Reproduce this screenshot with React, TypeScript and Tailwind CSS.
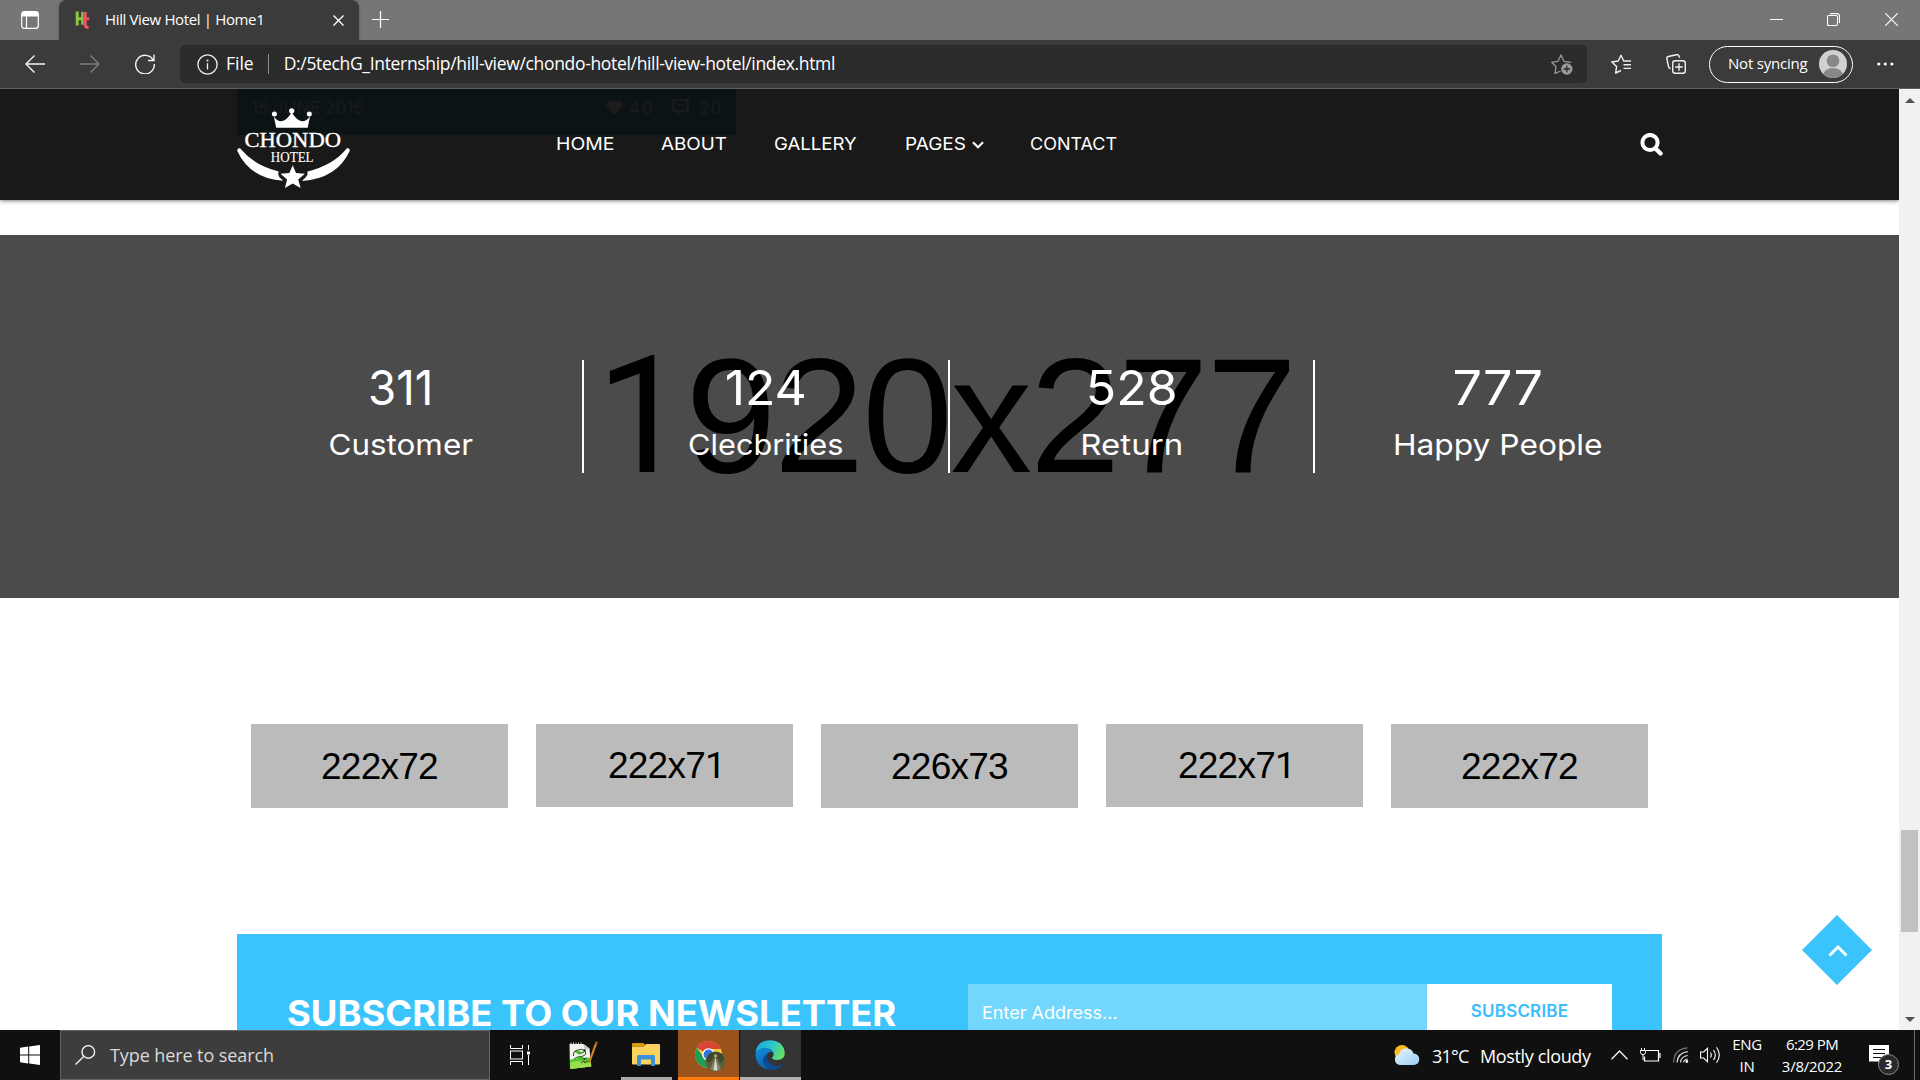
import React from "react";

const navItems = [
  { label: "HOME", cls: "w-[105px]", text: "scale-x-[1.115]" },
  { label: "ABOUT", cls: "w-[113px]", text: "scale-x-[1.085]" },
  { label: "GALLERY", cls: "w-[131px]", text: "scale-x-[1.07]" },
  { label: "PAGES", cls: "w-[125px]", text: "scale-x-[1.09]", menu: true },
  { label: "CONTACT", cls: "w-[100px]", text: "scale-x-[1.035]" },
];

const stats = [
  { value: "311", label: "Customer", v: "scale-x-[0.95]", l: "scale-x-[1.083]" },
  { value: "124", label: "Clecbrities", v: "scale-x-[1.04]", l: "scale-x-[1.06]" },
  { value: "528", label: "Return", v: "scale-x-[1.042]", l: "scale-x-[1.14]" },
  { value: "777", label: "Happy People", v: "scale-x-[1.086]", l: "scale-x-[1.094]" },
];

const partners = [
  { size: "222x72", cls: "h-[84px]" },
  { size: "222x71", cls: "h-[83px] pl-1" },
  { size: "226x73", cls: "h-[84px]" },
  { size: "222x71", cls: "h-[83px] pl-1" },
  { size: "222x72", cls: "h-[84px]" },
];

/* Dimension label whose "1" is drawn without a foot. */
function SizeLabel({ text }: { text: string }) {
  return (
    <span className="whitespace-nowrap">
      {text.split(/(1)/).map((part, i) =>
        part === "1" ? (
          <span key={i} className="font-['Roboto']">
            1
          </span>
        ) : (
          part
        ),
      )}
    </span>
  );
}

function TabStrip() {
  return (
    <div className="flex h-10 shrink-0 items-stretch bg-[#767676]">
      <div className="flex w-[59px] items-center pl-[21px]">
        <svg width="18" height="18" viewBox="0 0 18 18" fill="none" stroke="#fff" strokeWidth="1.2">
          <rect x="0.7" y="0.7" width="16.6" height="16.6" rx="2.6" />
          <path d="M1 3.5a2.5 2.5 0 0 1 2.5-2.5h11a2.5 2.5 0 0 1 2.5 2.5V5H1z" fill="#fff" />
          <path d="M5.5 5v12.5" />
        </svg>
      </div>
      <div className="flex w-[300px] items-center rounded-t-lg bg-[#3b3b3b] pl-4 shadow-[0_0_3px_rgba(0,0,0,0.35)]">
        <svg width="15" height="18" viewBox="0 0 15 18" fill="none">
          <path d="M2.200 0.500v14M2.200 7.800h5" stroke="#8cc540" strokeWidth="3" />
          <path d="M7.400 0.800v13" stroke="#8cc540" strokeWidth="2.400" />
          <path d="M10.200 1v12.500q0 3 3.400 3" stroke="#ec5564" strokeWidth="3" />
          <path d="M10.500 7.800h3.800" stroke="#ec5564" strokeWidth="2.800" />
        </svg>
        <span className="ml-[15px] w-[228px] whitespace-nowrap pb-0.5 font-['Open_Sans'] text-[15px] leading-5 tracking-[-0.36px] text-white">
          Hill View Hotel | Home1
        </span>
        <svg width="11" height="11" viewBox="0 0 11 11" stroke="#fff" strokeWidth="1.4" className="shrink-0">
          <path d="M0.5 0.5l10 10M10.5 0.5l-10 10" />
        </svg>
      </div>
      <div className="flex flex-1 items-center pl-[13px]">
        <svg width="17" height="17" viewBox="0 0 17 17" stroke="#fff" strokeWidth="1.2" className="mb-px">
          <path d="M8.5 0v17M0 8.5h17" />
        </svg>
      </div>
      <div className="flex w-[150px] items-center pb-px">
        <svg width="13" height="13" viewBox="0 0 13 13" stroke="#fff">
          <path d="M0 6.5h13" />
        </svg>
        <svg className="ml-11" width="13" height="13" viewBox="0 0 13 13" fill="none" stroke="#fff" strokeWidth="1.1">
          <rect x="0.5" y="2.5" width="10" height="10" rx="1.4" />
          <path d="M3 0.6h7.2a2.3 2.3 0 0 1 2.3 2.3V10" />
        </svg>
        <svg className="ml-[45px]" width="13" height="13" viewBox="0 0 13 13" stroke="#fff" strokeWidth="1.2">
          <path d="M0.3 0.3l12.4 12.4M12.7 0.3L0.3 12.7" />
        </svg>
      </div>
    </div>
  );
}

function Toolbar() {
  return (
    <div className="flex h-[49px] shrink-0 items-start border-b border-[#606060] bg-[#3b3b3b] pt-[5px] font-['Open_Sans'] text-white">
      <div className="flex h-[38px] w-[180px] items-center pb-px pl-[25px]">
        <svg width="20" height="18" viewBox="0 0 20 18" fill="none" stroke="#f5f5f5" strokeWidth="1.4">
          <path d="M20 9H1M9.5 0.5L1 9l8.500 8.500" />
        </svg>
        <svg className="ml-[35px]" width="20" height="18" viewBox="0 0 20 18" fill="none" stroke="#7c7c7c" strokeWidth="1.4">
          <path d="M0 9h19M10.500 0.500L19 9l-8.500 8.500" />
        </svg>
        <svg className="ml-[35px]" width="20" height="20" viewBox="0 0 20 20" fill="none" stroke="#f5f5f5" strokeWidth="1.400">
          <path d="M18.200 6.200A9.300 9.300 0 1 0 19.300 10" />
          <path d="M19 0.500v6h-6" />
        </svg>
      </div>
      <div className="flex h-[38px] w-[1407px] items-center rounded-[5px] bg-[#2b2b2b] pl-[17px]">
        <svg width="21" height="21" viewBox="0 0 21 21" fill="none" stroke="#f0f0f0" strokeWidth="1.300">
          <circle cx="10.500" cy="10.500" r="9.600" />
          <path d="M10.500 9.200v6.300" />
          <path d="M10.500 5.600v1.800" strokeWidth="1.700" />
        </svg>
        <span className="ml-2 pb-0.5 text-[17.5px] leading-6">File</span>
        <span className="ml-[14px] h-5 w-px bg-[#8b8b8b]" />
        <span className="ml-[15px] flex-1 whitespace-nowrap pb-0.5 text-[17.5px] leading-6 tracking-[-0.33px]">
          D:/5techG_Internship/hill-view/chondo-hotel/hill-view-hotel/index.html
        </span>
        <svg className="mr-[14px]" width="22" height="21" viewBox="0 0 22 21" fill="none" stroke="#9a9a9a" strokeWidth="1.300">
          <path d="M9.500 17l-5.500 2.500 1-6.700L0.800 8.300 7 7.300 10 1l3 6.300 7.200 1" strokeLinejoin="round" />
          <circle cx="15.800" cy="15" r="5.700" fill="#9a9a9a" stroke="none" />
          <path d="M15.800 11.800v6.400M12.600 15h6.400" stroke="#2b2b2b" />
        </svg>
      </div>
      <div className="flex h-[38px] items-center pl-6">
        <svg width="20" height="20" viewBox="0 0 20 20" fill="none" stroke="#f0f0f0" strokeWidth="1.400" strokeLinejoin="round">
          <path d="M10 16.500L4.600 19l1-6.400L0.800 8l6.400-1L10 1.200 12.700 7H20M12.500 10.700H20M12.500 14.400H20" />
        </svg>
        <svg className="ml-[35px]" width="20" height="20" viewBox="0 0 20 20" fill="none" stroke="#f0f0f0" strokeWidth="1.400">
          <rect x="6.700" y="6.700" width="12.600" height="12.600" rx="2.500" />
          <path d="M13 9.200v7.600M9.200 13h7.600" />
          <path d="M4.500 14.500q-1.600-.4-2-2L0.900 5Q0.400 3 2.400 2.500L10.500 0.700q2-.4 2.600 1.500l.5 1.600" />
        </svg>
        <div className="ml-[23px] flex h-[37px] w-[144px] items-center rounded-full border-[1.5px] border-white pl-[18px]">
          <span className="w-[91px] whitespace-nowrap pb-0.5 text-[15px] leading-5 tracking-[-0.2px]">Not syncing</span>
          <svg width="28" height="28" viewBox="0 0 28 28" className="shrink-0">
            <defs>
              <clipPath id="avatarClip">
                <circle cx="14" cy="14" r="14" />
              </clipPath>
            </defs>
            <g clipPath="url(#avatarClip)">
              <rect width="28" height="28" fill="#d2d0ce" />
              <circle cx="14" cy="10.700" r="6.300" fill="#8a8886" />
              <ellipse cx="14" cy="25.500" rx="10" ry="7.500" fill="#8a8886" />
            </g>
          </svg>
        </div>
        <svg className="ml-6" width="17" height="4" viewBox="0 0 17 4" fill="#fff">
          <circle cx="1.800" cy="2" r="1.600" />
          <circle cx="8.300" cy="2" r="1.600" />
          <circle cx="14.900" cy="2" r="1.600" />
        </svg>
      </div>
    </div>
  );
}

function Logo() {
  return (
    <svg className="relative" width="113" height="81" viewBox="0 0 113 81" fill="#fff">
      <path d="M39.200 19.700L36.800 8.500q4 5.600 8.700 4.600 5-1.200 9.200-9 4.200 7.800 9.300 9 4.700 1 9-4.600l-2.300 11.200z" />
      <circle cx="37.400" cy="6" r="2.500" />
      <circle cx="54.700" cy="2.800" r="2.600" />
      <circle cx="72.300" cy="6" r="2.500" />
      <text x="7.500" y="38.700" textLength="96.500" lengthAdjust="spacingAndGlyphs" fontFamily="Liberation Serif" fontSize="21.500" stroke="#fff" strokeWidth="0.350">
        CHONDO
      </text>
      <text x="33.800" y="54" textLength="42.800" lengthAdjust="spacingAndGlyphs" fontFamily="Liberation Serif" fontSize="14" stroke="#fff" strokeWidth="0.100">
        HOTEL
      </text>
      <path d="M0.300 43Q0 40.300 2.200 40.300q1.300 0 2.200 1.400Q17 57 41.700 63.500q-1.200 3.400 1 6l3.500 3.200Q13 70.500 0.300 43z" />
      <path d="M112.700 43q.3-2.700-1.900-2.700-1.300 0-2.200 1.400Q96 57 70.500 63.500q.5 3.400-1.500 5.500L65 73Q100 70.500 112.700 43z" />
      <path d="M55.700 57.300l3.300 7.800 8.900.7-6.700 5.800 2.400 8.400-7.900-4.500-7.800 4.500 2.200-8.400-6.600-5.800 8.900-.7z" />
    </svg>
  );
}

function SiteHeader() {
  return (
    <header className="relative z-10 flex h-[111px] shrink-0 items-center bg-[#191919] pl-[237px] shadow-[0_1px_4px_rgba(0,0,0,0.5)]">
      <div className="absolute left-[237px] top-0 flex h-[46px] w-[499px] bg-[#0b1314] pl-[14px] pt-[7px] text-[17.4px] leading-6 text-[#1a1b1b]">
        <span className="w-[355px]">15 JUNE 2015</span>
        <svg className="mt-1" width="17" height="15" viewBox="0 0 17 15" fill="#1c1c1c">
          <path d="M8.500 15L1.500 7.500Q-.5 4.800 1.300 2 3-.2 5.500.2 7.600.6 8.500 2.500 9.400.6 11.500.2q2.500-.4 4.200 1.800 1.800 2.800-.2 5.500z" />
        </svg>
        <span className="ml-[6px] w-[43px] tracking-[1.500px]">40</span>
        <svg className="mt-[3px]" width="17" height="17" viewBox="0 0 17 17" fill="none" stroke="#1c1c1c" strokeWidth="2">
          <path d="M1.200 1.200h14.600v10.600H9L6 15v-3.200H1.200z" />
          <path d="M4.500 6.500h8" strokeDasharray="2 1" />
        </svg>
        <span className="ml-2.5 tracking-[1px]">20</span>
      </div>
      <div className="w-[319px] pt-[7px]">
        <Logo />
      </div>
      <nav className="flex pb-[1px] text-[17.4px] leading-6 text-white">
        {navItems.map((n) => (
          <a key={n.label} className={"flex items-center " + n.cls}>
            <span className={"origin-left " + n.text}>{n.label}</span>
            {n.menu && (
              <svg className="ml-[11px] mt-[1px]" width="12" height="8" viewBox="0 0 12 8" fill="none" stroke="#fff" strokeWidth="2.200">
                <path d="M1 1.200l5 5 5-5" />
              </svg>
            )}
          </a>
        ))}
      </nav>
      <svg className="mb-px ml-[510px]" width="23" height="23" viewBox="0 0 23 23" fill="none" stroke="#fff">
        <circle cx="10" cy="9.500" r="7.600" strokeWidth="4" />
        <path d="M15.500 15.500l5 5" strokeWidth="4.400" strokeLinecap="round" />
      </svg>
    </header>
  );
}

function Stats() {
  return (
    <section className="relative mt-[35px] flex h-[363px] shrink-0 justify-center bg-[#4b4b4b] pt-[125px]">
      <div className="absolute inset-0 right-[8px] flex items-center justify-center font-['Liberation_Sans'] text-[163px] tracking-[-2.3px] text-black">
        <SizeLabel text="1920x277" />
      </div>
      <div className="relative flex h-[113px] w-[1462px] text-center text-white">
        {stats.map((s, i) => (
          <div key={s.value} className={"w-1/4 " + (i < 3 ? "border-r-2 border-white" : "")}>
            <div className={"text-[48px] leading-[56px] " + s.v}>{s.value}</div>
            <div className={"text-[29px] leading-[57px] " + s.l}>{s.label}</div>
          </div>
        ))}
      </div>
    </section>
  );
}

function Newsletter() {
  return (
    <section className="mx-auto mt-[126px] flex h-[146px] w-[1425px] shrink-0 items-start bg-[#3bc3fb] pl-[50px] pt-[50px]">
      <h2 className="w-[681px] whitespace-nowrap pt-[7px] text-[35px] font-bold leading-[44px] text-white">
        <span className="inline-block origin-left scale-x-[1.039]">SUBSCRIBE TO OUR NEWSLETTER</span>
      </h2>
      <div className="flex h-[60px] w-[459px] bg-[#73d6fd] pl-[14px] text-[17px] leading-[58px] text-white">
        <span className="origin-left scale-x-[1.06]">Enter Address...</span>
      </div>
      <button className="h-[60px] w-[185px] bg-white pb-[5px] text-[17px] font-semibold tracking-[0.200px] text-[#3bbcfb]">
        SUBSCRIBE
      </button>
    </section>
  );
}

function Scrollbar() {
  return (
    <div className="flex w-[21px] shrink-0 flex-col items-center bg-[#f1f1f1]">
      <svg className="mt-[9px]" width="10" height="5" viewBox="0 0 10 5" fill="#505050">
        <path d="M0 5L5 0l5 5z" />
      </svg>
      <div className="mt-[727px] h-[102px] w-[17px] bg-[#c1c1c1]" />
      <svg className="mt-[85px]" width="10" height="5" viewBox="0 0 10 5" fill="#505050">
        <path d="M0 0l5 5 5-5z" />
      </svg>
    </div>
  );
}

function Taskbar() {
  return (
    <div className="flex h-[50px] shrink-0 bg-[#101010] font-['Open_Sans'] text-white">
      <div className="flex w-[60px] items-center justify-center">
        <svg width="20" height="20" viewBox="0 0 20 20" fill="#fff">
          <path d="M0 2.700L8.200 1.600V9.500H0zM9.200 1.400L20 0v9.500H9.200zM0 10.500h8.200v8L0 17.300zM9.200 10.500H20V20L9.200 18.600z" />
        </svg>
      </div>
      <div className="flex w-[430px] items-center border border-[#646464] bg-[#3d3d3d] pl-[14px]">
        <svg width="21" height="20" viewBox="0 0 21 20" fill="none" stroke="#f0f0f0" strokeWidth="1.400">
          <circle cx="13.300" cy="6.900" r="6.300" />
          <path d="M8.700 11.400L0.500 19.500" />
        </svg>
        <span className="ml-[14px] text-[18px] leading-6 tracking-[-0.090px] text-[#dadada]">Type here to search</span>
      </div>
      <div className="flex w-[60px] items-center pl-5">
        <svg width="21" height="20" viewBox="0 0 21 20" fill="none" stroke="#fff">
          <path d="M0.500 0v3.500h12V0M0.500 20v-3.500h12V20M18.500 0v5M18.500 10v10" />
          <rect x="0.500" y="6" width="12" height="8" />
          <rect x="17" y="6.500" width="3" height="3" fill="#fff" stroke="none" />
        </svg>
      </div>
      <div className="flex w-[71px] items-center pl-[19px]">
        <svg width="29" height="29" viewBox="0 0 29 29">
          <path d="M0.500 3h14l6 4.500 1.500 18L1 28z" fill="#f2f4ee" />
          <path d="M14.500 3l1 5.500 5-1z" fill="#c3c8bd" />
          <path d="M1 18.500l20.500-2 .8 8.800L1.300 28z" fill="#56c832" />
          <path d="M1 22q8-4 21 0l.3 3.500L1.300 28z" fill="#9be04c" />
          <path d="M4.500 15q-1-5 4.500-6 4-2 7 1 2 4-2 5l-4 1q4 3 8 1M6 10l4 3 5-2M5 18q6-5 11 1M12 22l3-2 1 2 3-2" fill="none" stroke="#2b4522" strokeWidth="1" />
          <path d="M6 11q5-2.500 8 1-3 3-8-1zM7 17q4-3 8 0-4 3-8 0z" fill="#4fb82a" />
          <circle cx="15.500" cy="9.500" r="1.200" fill="#1b2b16" />
          <path d="M2 3v-1.500M4.500 3v-1.500M7 3v-1.500M9.500 3v-1.500M12 3v-1.500" stroke="#c8c8c8" />
          <path d="M27.500 1.200L20 22" stroke="#d6841d" strokeWidth="2.200" />
          <path d="M27.800 0.600l-.9 2.600" stroke="#9c4930" strokeWidth="2.400" />
        </svg>
      </div>
      <div className="flex w-[51px] flex-col items-center justify-between">
        <svg className="mr-px mt-[13px]" width="28" height="23" viewBox="0 0 28 23">
          <path d="M0 1q0-1 1-1h10q1 0 1.500 1l.8 2.500H0z" fill="#d99a0c" />
          <path d="M0 3.500h12l2-2.500H27q1 0 1 1v18.500q0 1-1 1H1q-1 0-1-1z" fill="#fbd25c" />
          <path d="M5 13.500q0-1.500 1.500-1.500h15q1.500 0 1.500 1.500V23h-4v-6.500H9V23H5z" fill="#3d8fd6" />
        </svg>
        <div className="h-[3px] w-full bg-[#aca8ac]" />
      </div>
      <div className="ml-[6px] flex w-[61px] flex-col items-center justify-between bg-[#9a541b]">
        <svg className="ml-0.5 mt-[10px]" width="32" height="32" viewBox="0 0 32 32">
          <circle cx="14.500" cy="14.500" r="13.500" fill="#f8c93c" />
          <path d="M14.500 14.500L2.800 7.750A13.500 13.500 0 0 1 26.800 9H14.500z" fill="#da4437" />
          <path d="M2.800 7.750A13.500 13.500 0 0 0 13.500 28l5.800-10.500-9.500 0z" fill="#1d9e57" />
          <circle cx="14.500" cy="14.500" r="6.300" fill="#fff" />
          <circle cx="14.500" cy="14.500" r="4.900" fill="#3277e8" />
          <circle cx="21.500" cy="21.500" r="10" fill="#5b5e3c" />
          <path d="M15 14q6-4 13 0l2 6-4 3-2-5h-5l-3 5-4-3z" fill="#3b4a2c" />
          <path d="M21.500 17l-5.500 12q5.500 3 11 0z" fill="#8a8163" />
          <path d="M21.500 17l-2 13.500h4z" fill="#cfdad0" />
          <circle cx="21.500" cy="16" r="1.700" fill="#c89a70" />
        </svg>
        <div className="h-[3px] w-full bg-[#ff7a06]" />
      </div>
      <div className="ml-px flex w-[61px] flex-col items-center justify-between bg-[#333333]">
        <svg className="mr-px mt-[10px]" width="30" height="30" viewBox="0 0 30 30">
          <defs>
            <linearGradient id="edgeTop" x1="0" y1="0.300" x2="1" y2="0.600">
              <stop offset="0" stopColor="#22a8e0" />
              <stop offset="0.550" stopColor="#2fc9c9" />
              <stop offset="1" stopColor="#6be155" />
            </linearGradient>
            <linearGradient id="edgeLow" x1="0" y1="0" x2="0.600" y2="1">
              <stop offset="0" stopColor="#1291dc" />
              <stop offset="1" stopColor="#0a56a8" />
            </linearGradient>
          </defs>
          <path d="M0.500 13Q2 .3 15 0.200 28.500.5 29.800 13q0 7-7.800 7-5.500-.2-4.800-2.500 2.300-2.300 1-5Q16 8.500 10.500 8.200 3.500 8.300.5 13z" fill="url(#edgeTop)" />
          <path d="M.3 14Q2 8 9.500 8q6 .2 8.500 4-3.500-1-5.500 1.500-3 4.500.8 9 4.200 5 11 3.200 2.300-.8 3.300-1.300Q23 30.500 14.500 29.800 1.500 28.500.3 14z" fill="url(#edgeLow)" />
          <path d="M12.500 13.500q-5 2.500-4.500 8 1.500 7.500 9 8.300 6.500-.8 11.300-6-7.500 4.700-13-.3-5-5-2.800-10z" fill="#0d4a92" />
        </svg>
        <div className="h-[3px] w-full bg-[#b4b0b4]" />
      </div>
      <div className="flex flex-1 items-center pl-[593px]">
        <svg width="26" height="20" viewBox="0 0 26 20">
          <defs>
            <linearGradient id="cloud" x1="0" y1="0" x2="1" y2="1">
              <stop offset="0" stopColor="#eaf6fe" />
              <stop offset="1" stopColor="#9bccf2" />
            </linearGradient>
          </defs>
          <circle cx="8" cy="7.500" r="7.500" fill="#fbb91f" />
          <path d="M6 20a5.500 5.500 0 0 1-1-10.800q1.500-5.700 7.500-5.900 5.500.2 7 5.300 5.500.4 5.800 5.700-.3 5.400-5.800 5.700z" fill="url(#cloud)" />
        </svg>
        <span className="ml-[12px] w-[48px] whitespace-nowrap pt-px text-[18px] leading-6 tracking-[-0.800px]">31°C</span>
        <span className="w-[131px] whitespace-nowrap pt-px text-[18px] leading-6 tracking-[-0.360px]">Mostly cloudy</span>
        <svg width="17" height="10" viewBox="0 0 17 10" fill="none" stroke="#f0f0f0" strokeWidth="1.400">
          <path d="M0.500 9.300L8.500 1l8 8.300" />
        </svg>
        <svg className="ml-[12px]" width="21" height="14" viewBox="0 0 21 14" fill="none" stroke="#fff">
          <path d="M6 2.500h12.500v10.500H4.500V8.500M20 5v5" strokeWidth="1.200" />
          <path d="M1.500 0v2.500M4.500 0v2.500M0.500 2.500h5v2.200q-.3 1.800-2.500 1.900-2.200-.1-2.500-1.900zM3 6.500V12" />
        </svg>
        <svg className="ml-[12px]" width="16" height="16" viewBox="0 0 16 16" fill="none" strokeWidth="1.200">
          <path d="M0.600 15.500Q1 2 14.500 0.800" stroke="#777" />
          <path d="M4 15.500Q4.500 6 14.800 4.700M7.500 15.500Q8 9.500 14.800 8.500M10.500 15.500q.5-3 4.300-3.500" stroke="#d8d8d8" />
          <circle cx="13.800" cy="14.500" r="1.400" fill="#fff" />
        </svg>
        <svg className="ml-[11px]" width="21" height="18" viewBox="0 0 21 18" fill="none" stroke="#fff" strokeWidth="1.100">
          <path d="M0.600 6h3L7.500 2.300v13.400L3.600 12h-3z" />
          <path d="M10.500 6.500q1.600 2.500 0 5M13.500 4q3.600 5 0 10M16.500 1.200q5.600 7.800 0 15.600" />
        </svg>
        <div className="ml-[8px] w-[36px] text-center text-[15px] leading-[22px] tracking-[-0.300px]">
          <div>ENG</div>
          <div>IN</div>
        </div>
        <div className="ml-[8px] w-[78px] pb-[1px] text-center text-[15px] leading-[22px]">
          <div className="tracking-[-0.550px]">6:29 PM</div>
          <div className="tracking-[-0.270px]">3/8/2022</div>
        </div>
        <div className="relative ml-[18px] h-[50px] w-[45px]">
          <svg className="mt-[15px]" width="20" height="20" viewBox="0 0 20 20">
            <path d="M0 0h20v16.500h-7L9.500 20v-3.500H0z" fill="#fff" />
            <path d="M4 4.500h12M4 8.500h12M4 12.500h8" stroke="#101010" />
          </svg>
          <div className="absolute left-[9px] top-6 flex size-[21px] items-center justify-center rounded-full border border-[#8a8a8a] bg-[#2a2a2a] text-[13px] font-bold leading-none">
            3
          </div>
        </div>
        <div className="h-full w-px bg-[#6b6b6b]" />
      </div>
    </div>
  );
}

export default function App() {
  return (
    <div className="flex h-[1080px] w-[1920px] flex-col overflow-hidden bg-white font-['Inter']">
      <TabStrip />
      <Toolbar />
      <div className="flex h-[941px] shrink-0">
        <main className="relative flex w-[1899px] flex-col overflow-hidden bg-white">
          <SiteHeader />
          <Stats />
          <div className="mx-auto mt-[126px] flex w-[1397px] shrink-0 items-start justify-between">
            {partners.map((p, i) => (
              <div
                key={i}
                className={
                  "flex w-[257px] items-center justify-center bg-[#bbbbbb] pt-px font-['Liberation_Sans'] text-[37px] tracking-[-0.750px] text-black " + p.cls
                }
              >
                <SizeLabel text={p.size} />
              </div>
            ))}
          </div>
          <Newsletter />
          <div className="absolute left-[1802px] top-[826px] flex size-[70px] items-center justify-center bg-[#3bc3fb] [clip-path:polygon(50%_0,100%_50%,50%_100%,0_50%)]">
            <svg className="ml-0.5" width="20" height="13" viewBox="0 0 20 13" fill="none" stroke="#fff" strokeWidth="3">
              <path d="M1.500 11.500L10 3l8.500 8.500" />
            </svg>
          </div>
        </main>
        <Scrollbar />
      </div>
      <Taskbar />
    </div>
  );
}
